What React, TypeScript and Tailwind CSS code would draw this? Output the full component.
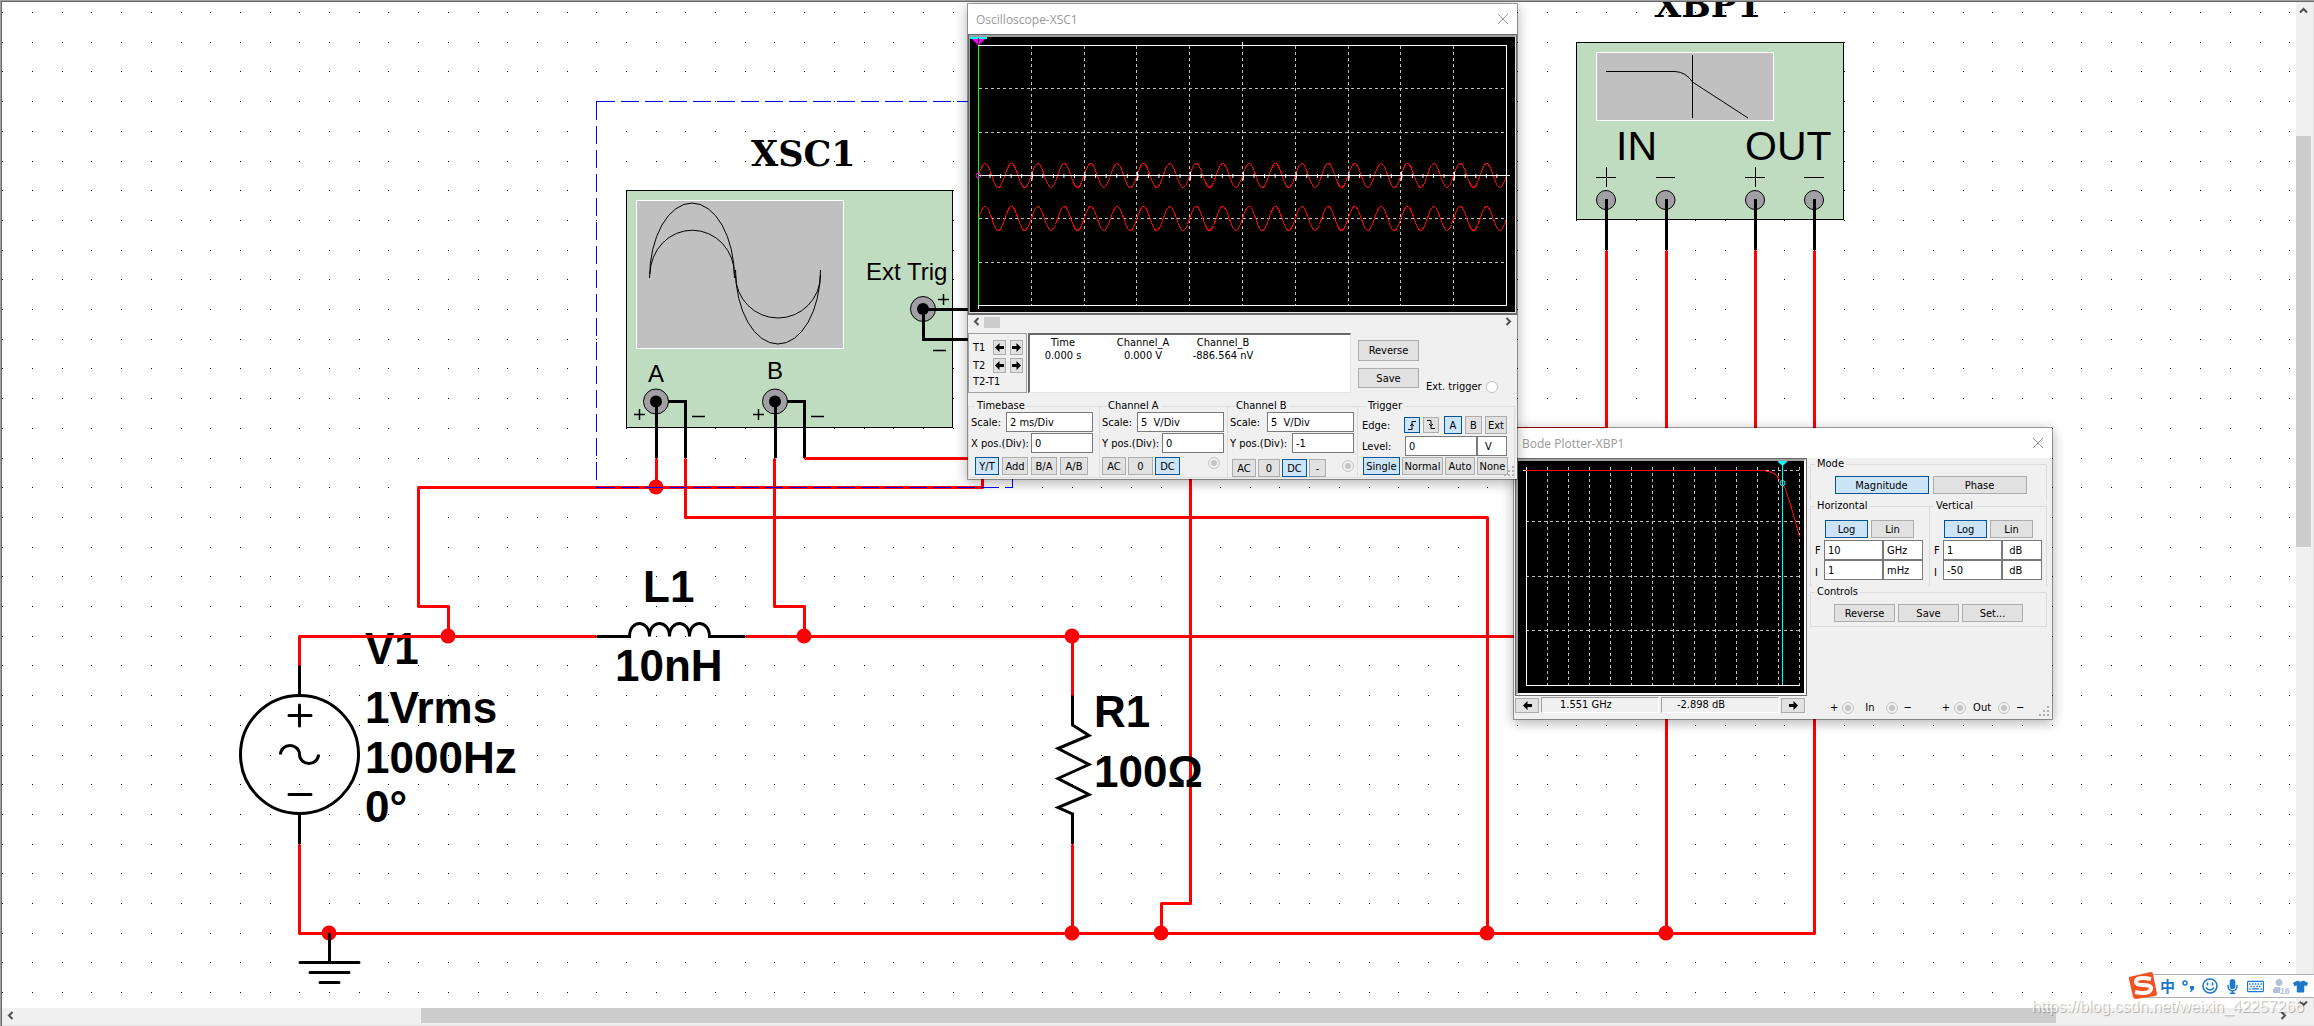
import type { ReactNode } from "react";
import { FaMicrophone, FaRegKeyboard, FaTshirt, FaUser } from "react-icons/fa";

// Schematic grid: wires and pins snap to these lines
const gx = (k: number) => Math.round(2.3 + 29.7 * k) + 0.5;
const gy = (k: number) => Math.round(12 + 29.7 * k) + 0.5;

const gridDots = () => {
  let d = "";
  for (let i = 0; i < 78; i++) {
    for (let j = 0; j < 34; j++) {
      d += `M${gx(i) - 0.5} ${gy(j)}h1`;
    }
  }
  return d;
};

// Turns a list of grid points into a wire path
const wire = (...pts: [number, number][]) =>
  pts.map(([x, y], i) => `${i ? "L" : "M"}${gx(x)} ${gy(y)}`).join("");

const WIRES = [
  wire([10, 22], [10, 21], [20, 21]),
  wire([25, 21], [51, 21]),
  wire([10, 28], [10, 31], [61, 31], [61, 8]),
  wire([15, 21], [15, 20], [14, 20], [14, 16], [33, 16], [33, 15]),
  wire([22, 15], [22, 16]),
  wire([23, 15], [23, 17], [50, 17], [50, 31]),
  wire([26, 15], [26, 20], [27, 20], [27, 21]),
  wire([27, 15], [40, 15], [40, 30], [39, 30], [39, 31]),
  wire([36, 21], [36, 23]),
  wire([36, 28], [36, 31]),
  wire([54, 8], [54, 14], [50, 14]),
  wire([56, 8], [56, 31]),
  wire([59, 8], [59, 15]),
];

const JUNCTIONS: [number, number][] = [
  [11, 31], [15, 21], [22, 16], [27, 21], [36, 21], [36, 31], [39, 31], [50, 31], [56, 31],
];

const sine = (x0: number, x1: number, yc: number, amp: number, cycles: number) => {
  let d = "";
  for (let x = x0; x <= x1; x += 1) {
    const y = yc - amp * Math.sin(((x - x0) / (x1 - x0)) * cycles * 2 * Math.PI);
    d += `${d ? "L" : "M"}${x} ${y.toFixed(1)}`;
  }
  return d;
};

const Schematic = () => (
  <svg className="absolute inset-0 h-full w-full" aria-label="Circuit schematic">
    <g transform="translate(-2 -2)" fill="none">
      <path d={gridDots()} stroke="#000" shapeRendering="crispEdges" />

      <g fill="#000" className="font-['Liberation_Sans',Arial,sans-serif] text-[44px] font-bold">
        <text x="365" y="664">V1</text>
      </g>

      {/* XSC1 body */}
      <g stroke="#000">
        <rect x="626.5" y="190.5" width="326" height="237" fill="#c0dcc0" />
        <rect x="636.5" y="200.5" width="207" height="148" fill="#c0c0c0" stroke="#fff" />
        <path d="M649.5 278A42.5 75 0 0 1 734.5 278M735.5 270A42.5 74 0 0 0 820.5 270" />
        <path d="M650 274A42 44 0 0 1 734.5 275M735.5 275A42.5 43 0 0 0 820.5 275" />
        <circle cx="656" cy="401.5" r="12.5" fill="#a0a0a4" />
        <circle cx="775" cy="401.5" r="12.5" fill="#a0a0a4" />
        <circle cx="923" cy="309" r="12.5" fill="#a0a0a4" />
        <path d="M634 414.5h11M639.5 409v11M753 414.5h11M758.5 409v11M938 299.5h11M943.5 294v11M692 416.5h13M811 416.5h13M933 350.5h13" strokeWidth="1.5" />
        <path
          d="M656.5 402V458M668 401.5H685.5V458M775.5 402V458M787 401.5H804.5V458M923 309.5H972M923.5 309V339.5H972"
          strokeWidth="3"
        />
      </g>
      <g fill="#000">
        <circle cx="656" cy="401.5" r="6" />
        <circle cx="775" cy="401.5" r="6" />
        <circle cx="923" cy="309" r="6" />
      </g>
      <g fill="#000" className="font-['Liberation_Sans',Arial,sans-serif] text-[24px]">
        <text x="866" y="280">Ext Trig</text>
        <text x="648" y="382">A</text>
        <text x="767" y="379">B</text>
      </g>

      {/* XBP1 body */}
      <g stroke="#000">
        <rect x="1576.5" y="42.5" width="267" height="177" fill="#c0dcc0" />
        <rect x="1596.5" y="52.5" width="177" height="68" fill="#c0c0c0" stroke="#fff" />
        <path d="M1606 71.5H1675Q1686 72 1692.5 82L1748 118M1692.5 55V118" />
        <path d="M1596 177.5h20M1606.5 167v20M1656 177.5h19M1745 177.5h20M1755.5 167v20M1804 177.5h20" />
        <circle cx="1606" cy="200" r="9.5" fill="#a0a0a4" />
        <circle cx="1665.5" cy="200" r="9.5" fill="#a0a0a4" />
        <circle cx="1755" cy="200" r="9.5" fill="#a0a0a4" />
        <circle cx="1814" cy="200" r="9.5" fill="#a0a0a4" />
        <path d="M1606.5 199V250M1666.5 199V250M1755.5 199V250M1814.5 199V250" strokeWidth="3" />
      </g>
      <g fill="#000" className="font-['Liberation_Sans',Arial,sans-serif] text-[41px]">
        <text x="1616" y="160">IN</text>
        <text x="1745" y="160">OUT</text>
      </g>

      {/* V1, L1, R1 and ground symbols */}
      <g stroke="#000" strokeWidth="3">
        <path d="M299.5 665V696M299.5 814V844" />
        <ellipse cx="299.5" cy="754.5" rx="59" ry="59" />
        <path d="M289 715.5h22M299.5 705v21M289 794.5h22" strokeLinecap="round" />
        <path d="M280.5 754.5A9.5 9 0 0 1 299.5 754.5A9.5 9 0 0 0 318.5 754.5" />
        <path d="M597 636.5H629.5C629.5 619 649.5 619 649.5 636.5C649.5 619 669.5 619 669.5 636.5C669.5 619 689.5 619 689.5 636.5C689.5 619 709.5 619 709.5 636.5H745" />
        <path d="M1072.5 695V725L1089 735.5L1058 748.5L1089 764.5L1058 778.5L1089 794.5L1058 807.5L1072.5 814V844" />
      </g>

      <g stroke="#f00" strokeWidth="3" strokeLinejoin="round">
        {WIRES.map((d) => (
          <path key={d} d={d} />
        ))}
      </g>
      {JUNCTIONS.map(([x, y]) => (
        <circle key={`${x}-${y}`} cx={gx(x) - 0.5} cy={gy(y) - 0.5} r="7.5" fill="#f00" />
      ))}
      <path
        d="M329.5 934V962M300 962.5H359M310 972.5H349M320 982.5H339"
        stroke="#000"
        strokeWidth="3"
        strokeLinecap="round"
      />
      <path d="M596.5 101.5H1012.5M596.5 101.5V487.5M596.5 487.5H1012.5V101.5" stroke="#00f" strokeDasharray="18 6" shapeRendering="crispEdges" />

      <g fill="#000" className="font-['Liberation_Sans',Arial,sans-serif] text-[44px] font-bold">
        <text x="365" y="723">1Vrms</text>
        <text x="365" y="773">1000Hz</text>
        <text x="365" y="822">0°</text>
        <text x="643" y="602">L1</text>
        <text x="615" y="681">10nH</text>
        <text x="1094" y="727">R1</text>
        <text x="1094" y="787">100Ω</text>
      </g>
      <g fill="#000" className="font-['DejaVu_Serif','Courier_New',serif] text-[35px] font-bold">
        <text x="751" y="166">XSC1</text>
        <text x="1654" y="17">XBP1</text>
      </g>
    </g>
  </svg>
);

const Btn = ({ children, active, label, className = "" }: { children: ReactNode; active?: boolean; label?: string; className?: string }) => (
  <button
    type="button"
    aria-label={label}
    className={`flex h-[18px] items-center justify-center border ${
      active ? "border-[#005499] bg-[#cce4f7]" : "border-[#adadad] bg-[#e1e1e1]"
    } ${className}`}
  >
    {children}
  </button>
);

const Arrow = ({ left }: { left?: boolean }) => (
  <svg width="9" height="9" viewBox="0 0 9 9" className={left ? "" : "rotate-180"}>
    <path d="M0 4.5L4.5 0V3H9V6H4.5V9Z" fill="#000" />
  </svg>
);

const Chevron = ({ className = "" }: { className?: string }) => (
  <svg width="9" height="9" viewBox="0 0 9 9" className={className}>
    <path d="M6.5 1L3 4.5L6.5 8" fill="none" stroke="#505050" strokeWidth="2" />
  </svg>
);

const Box = ({ id, value, label, className = "" }: { id?: string; value: string; label?: string; className?: string }) => (
  <input
    id={id}
    aria-label={label}
    defaultValue={value}
    className={`h-5 border border-[#7a7a7a] bg-white pl-[3px] ${className}`}
  />
);

const Field = ({ id, label, value, className }: { id: string; label: string; value: string; className: string }) => (
  <div className="flex items-center justify-between">
    <label htmlFor={id} className="whitespace-nowrap">{label}</label>
    <Box id={id} value={value} className={className} />
  </div>
);

const Radio = ({ label, checked, className = "" }: { label: string; checked?: boolean; className?: string }) => (
  <input
    type="radio"
    aria-label={label}
    defaultChecked={checked}
    className={`size-3 shrink-0 appearance-none rounded-full border border-[#c4c4c4] bg-white bg-clip-content p-0.5 checked:bg-[#c4c4c4] ${className}`}
  />
);

const Group = ({ title, children, className = "" }: { title: string; children: ReactNode; className?: string }) => (
  <fieldset className={`min-w-0 border-[#dcdcdc] ${className}`}>
    <legend className="ml-1 px-0.5 leading-3">{title}</legend>
    {children}
  </fieldset>
);

const Grip = () => (
  <svg width="11" height="11" viewBox="0 0 11 11" className="absolute right-0.5 bottom-0.5" aria-hidden="true">
    <path d="M8 1h2M4 5h2M8 5h2M0 9h2M4 9h2M8 9h2" stroke="#b0b0b0" strokeWidth="2" />
  </svg>
);

const Window = ({ title, children, className = "" }: { title: string; children: ReactNode; className?: string }) => (
  <section
    className={`absolute flex flex-col border border-black/35 bg-[#f0f0f0] bg-clip-padding shadow-[0_3px_12px_rgba(0,0,0,0.3)] ${className}`}
  >
    <header className="flex h-[30px] shrink-0 items-center justify-between bg-white pr-2 pl-2">
      <h2 className="font-['Open_Sans','Noto_Sans',sans-serif] text-[12px] text-[#999]">{title}</h2>
      <button type="button" aria-label={`Close ${title}`}>
        <svg width="12" height="12" viewBox="0 0 12 12">
          <path d="M1 1L11 11M11 1L1 11" stroke="#999" />
        </svg>
      </button>
    </header>
    {children}
  </section>
);

const ScopePlot = () => (
  <svg width="545" height="275" viewBox="0 0 545 275" className="block bg-black" fill="none" aria-label="Oscilloscope trace">
    <path d="M61.5 9V268M114.5 9V268M166.5 9V268M219.5 9V268M272.5 9V268M325.5 9V268M378.5 9V268M430.5 9V268M483.5 9V268M9 51.5H536M9 95.5H536M9 181.5H536M9 225.5H536" stroke="#c0c0c0" strokeDasharray="3 3" shapeRendering="crispEdges" />
    <path d={sine(8.5, 536.5, 138.5, 12, 20)} stroke="#f00" shapeRendering="crispEdges" />
    <path d={sine(8.5, 536.5, 181.5, 12, 20)} stroke="#f00" shapeRendering="crispEdges" />
    <path d="M8 8.5H536.5V268.5H8M8.5 268V272M272.5 5V9M8 138.5H540" stroke="#fff" shapeRendering="crispEdges" />
    <path d="M19.5 139H536" stroke="#fff" strokeWidth="4" strokeDasharray="1 9.56" />
    <path d="M61.5 139H536" stroke="#fff" strokeWidth="9" strokeDasharray="1 51.8" />
    <path d="M8.5 9V268" stroke="#0f0" shapeRendering="crispEdges" />
    <path d="M0 0H17V2H0Z" fill="#0ff" />
    <path d="M2 2H15L8.5 8.5Z" fill="#f0f" />
    <path d="M8.5 1V7" stroke="#000" />
    <circle cx="8.5" cy="138.5" r="2.5" stroke="#f0f" />
  </svg>
);

const Oscilloscope = () => (
  <Window title="Oscilloscope-XSC1" className="top-px left-[965px] z-20 w-[551px]">
    <div className="border border-b-2 border-[#696969]">
      <div className="border-t-2 border-r border-b border-l border-t-[#a0a0a0] border-r-[#e3e3e3] border-b-[#e3e3e3] border-l-[#a0a0a0]">
        <div className="overflow-hidden bg-black">
          <ScopePlot />
        </div>
      </div>
    </div>
    <div className="flex h-[18px] items-start justify-between px-1 pt-0.5">
      <Chevron />
      <div className="mr-auto ml-[3px] h-[11px] w-4 bg-[#cdcdcd]" />
      <Chevron className="rotate-180" />
    </div>

    <div className="flex h-[60px]">
      <div className="flex w-[59px] flex-col gap-[3px] border border-[#a0a0a0] pt-1.5 pl-1">
        {["T1", "T2"].map((t) => (
          <div key={t} className="flex items-center gap-1">
            <span className="w-4">{t}</span>
            <Btn label={`${t} left`} className="!h-[15px] w-[13px]"><Arrow left /></Btn>
            <Btn label={`${t} right`} className="!h-[15px] w-[13px]"><Arrow /></Btn>
          </div>
        ))}
        <span className="leading-3">T2-T1</span>
      </div>
      <div className="ml-px w-[323px] border-t-2 border-r border-b border-l-2 border-t-[#696969] border-r-[#e3e3e3] border-b-[#e3e3e3] border-l-[#696969] bg-white">
        <table className="mt-px text-center leading-[13px]">
          <thead>
            <tr>
              <th className="w-[66px] font-normal">Time</th>
              <th className="w-[94px] font-normal">Channel_A</th>
              <th className="w-[66px] font-normal whitespace-nowrap">Channel_B</th>
            </tr>
          </thead>
          <tbody>
            <tr>
              <td>0.000 s</td>
              <td>0.000 V</td>
              <td className="whitespace-nowrap">-886.564 nV</td>
            </tr>
          </tbody>
        </table>
      </div>
      <div className="ml-[7px] flex flex-col gap-[7px] pt-[7px]">
        <Btn className="!h-[21px] w-[61px]">Reverse</Btn>
        <Btn className="!h-5 w-[61px]">Save</Btn>
      </div>
      <div className="ml-[7px] flex items-center gap-1 self-end">
        <label htmlFor="ext-trigger">Ext. trigger</label>
        <input id="ext-trigger" type="radio" className="size-3 appearance-none rounded-full border border-[#c4c4c4] bg-white" />
      </div>
    </div>

    <div className="mt-[7px] flex h-[79px] pb-px">
      <Group title="Timebase" className="w-[132px] border pr-1.5 pl-0.5">
        <div className="flex flex-col gap-px">
          <Field id="tb-scale" label="Scale:" value="2 ms/Div" className="w-[87px]" />
          <Field id="tb-pos" label="X pos.(Div):" value="0" className="w-[62px]" />
        </div>
        <div className="mt-1 flex gap-[3px] pl-1">
          <Btn active className="w-6">Y/T</Btn>
          <Btn className="w-[26px]">Add</Btn>
          <Btn className="w-[26px]">B/A</Btn>
          <Btn className="w-7">A/B</Btn>
        </div>
      </Group>
      <Group title="Channel A" className="w-[128px] border-y border-r pr-[3px] pl-0.5">
        <div className="flex flex-col gap-px">
          <Field id="a-scale" label="Scale:" value="5  V/Div" className="w-[87px]" />
          <Field id="a-pos" label="Y pos.(Div):" value="0" className="w-[62px]" />
        </div>
        <div className="mt-1 flex gap-0.5">
          <Btn className="w-6">AC</Btn>
          <Btn className="w-[25px]">0</Btn>
          <Btn active className="w-[25px]">DC</Btn>
          <Radio label="Channel A connected" checked className="mr-1 ml-auto" />
        </div>
      </Group>
      <Group title="Channel B" className="w-[130px] border-y border-r pr-[3px] pl-0.5">
        <div className="flex flex-col gap-px">
          <Field id="b-scale" label="Scale:" value="5  V/Div" className="w-[87px]" />
          <Field id="b-pos" label="Y pos.(Div):" value="-1" className="w-[62px]" />
        </div>
        <div className="mt-1.5 flex gap-0.5 pl-0.5">
          <Btn className="w-6">AC</Btn>
          <Btn className="w-[22px]">0</Btn>
          <Btn active className="w-[25px]">DC</Btn>
          <Btn className="w-[17px]">-</Btn>
          <Radio label="Channel B connected" checked className="mt-px ml-auto" />
        </div>
      </Group>
      <Group title="Trigger" className="mr-0.5 flex-1 border-y border-r pl-1">
        <div className="flex items-center gap-[3px] pt-1">
          <span className="mr-auto">Edge:</span>
          <Btn active label="Rising edge" className="!h-4 w-4">
            <svg width="10" height="10" viewBox="0 0 10 10">
              <path d="M1 9.5H5V1.5H9M3 6L5 4L7 6" fill="none" stroke="#000" />
            </svg>
          </Btn>
          <Btn label="Falling edge" className="!h-4 w-4">
            <svg width="10" height="10" viewBox="0 0 10 10">
              <path d="M1 0.5H5V8.5H9M3 4L5 6L7 4" fill="none" stroke="#000" />
            </svg>
          </Btn>
          <Btn active className="ml-0.5 w-[18px]">A</Btn>
          <Btn className="w-[17px]">B</Btn>
          <Btn className="mr-[7px] w-[22px]">Ext</Btn>
        </div>
        <div className="mt-0.5 flex items-center">
          <label htmlFor="trig-level">Level:</label>
          <Box id="trig-level" value="0" className="ml-auto w-[72px]" />
          <Box label="Level unit" value="V" className="mr-[7px] w-[30px] pl-[7px]" />
        </div>
        <div className="mt-px flex gap-0.5 pl-px">
          <Btn active className="w-[37px]">Single</Btn>
          <Btn className="w-[41px]">Normal</Btn>
          <Btn className="w-[30px]">Auto</Btn>
          <Btn className="w-[31px]">None</Btn>
        </div>
      </Group>
    </div>
    <Grip />
  </Window>
);

const BodePlot = () => (
  <svg width="286" height="232" viewBox="0 0 286 232" className="block bg-black" fill="none" aria-label="Magnitude response">
    <path d="M29.5 6V224M50.5 6V224M71.5 6V224M92.5 6V224M113.5 6V224M134.5 6V224M155.5 6V224M176.5 6V224M197.5 6V224M218.5 6V224M239.5 6V224M260.5 6V224M281.5 6V224M8 9.5H282M8 60.5H282M8 115.5H282M8 169.5H282" stroke="#c0c0c0" strokeDasharray="3 3" shapeRendering="crispEdges" />
    <path d="M8.5 6V224.5H282M5 9.5H9" stroke="#fff" shapeRendering="crispEdges" />
    <path d="M8 9.5H243Q254 10 258 14Q263 20 267 27Q275 50 281.5 76" stroke="#f00" shapeRendering="crispEdges" />
    <path d="M264.5 1V224" stroke="#0ff" shapeRendering="crispEdges" />
    <path d="M260 0H269V1L264.5 5L260 1Z" fill="#0ff" />
    <circle cx="264.5" cy="22" r="2.5" stroke="#0ff" />
  </svg>
);

const AxisFields = ({ name, f, fUnit, i, iUnit }: { name: string; f: string; fUnit: string; i: string; iUnit: string }) => (
  <div className="pt-2 pl-1">
    <div className="flex gap-[3px] pl-2.5">
      <Btn active className="w-[43px]">Log</Btn>
      <Btn className="w-[43px]">Lin</Btn>
    </div>
    <div className="mt-0.5 flex items-center">
      <label htmlFor={`${name}-f`} className="w-[9px]">F</label>
      <Box id={`${name}-f`} value={f} className="w-[59px]" />
      <Box label={`${name} F unit`} value={fUnit} className="w-10" />
    </div>
    <div className="flex items-center">
      <label htmlFor={`${name}-i`} className="w-[9px] pt-1">I</label>
      <Box id={`${name}-i`} value={i} className="w-[59px]" />
      <Box label={`${name} I unit`} value={iUnit} className="w-10" />
    </div>
  </div>
);

const BodePlotter = () => (
  <Window title="Bode Plotter-XBP1" className="top-[425px] left-[1511px] z-10 w-[540px]">
    <div className="flex h-[261px]">
      <div className="ml-px flex w-[292px] shrink-0 flex-col">
        <div className="border border-[#696969]">
          <div className="border-2 border-t-[#a0a0a0] border-r-white border-b-white border-l-[#a0a0a0]">
            <BodePlot />
          </div>
        </div>
        <div className="mt-px flex items-center gap-0.5">
          <Btn label="Cursor left" className="!h-[15px] w-6"><Arrow left /></Btn>
          <output className="h-4 w-[118px] border border-t-[#a0a0a0] border-r-white border-b-white border-l-[#a0a0a0] pl-[18px] leading-[14px]">1.551 GHz</output>
          <output className="h-4 w-[118px] border border-t-[#a0a0a0] border-r-white border-b-white border-l-[#a0a0a0] pl-[15px] leading-[14px]">-2.898 dB</output>
          <Btn label="Cursor right" className="!h-[15px] w-6"><Arrow /></Btn>
        </div>
      </div>

      <div className="mr-[5px] ml-[3px] flex flex-1 flex-col">
        <Group title="Mode" className="h-[42px] border-x border-t">
          <div className="flex justify-center gap-1 pt-1.5 pl-1">
            <Btn active className="w-[94px]">Magnitude</Btn>
            <Btn className="w-[94px]">Phase</Btn>
          </div>
        </Group>
        <div className="flex h-[86px]">
          <Group title="Horizontal" className="w-[120px] border-x border-t">
            <AxisFields name="Horizontal" f="10" fUnit="GHz" i="1" iUnit="mHz" />
          </Group>
          <Group title="Vertical" className="flex-1 border-t border-r">
            <AxisFields name="Vertical" f="1" fUnit=" dB" i="-50" iUnit=" dB" />
          </Group>
        </div>
        <Group title="Controls" className="h-[41px] border">
          <div className="flex justify-center gap-[3px] pt-1.5">
            <Btn className="w-[61px]">Reverse</Btn>
            <Btn className="w-[61px]">Save</Btn>
            <Btn className="w-[61px]">Set...</Btn>
          </div>
        </Group>
        <div className="mt-auto mb-[5px] flex items-center gap-1 pl-5">
          <span>+</span>
          <Radio label="In plus" checked />
          <span className="mx-[7px]">In</span>
          <Radio label="In minus" checked />
          <span className="ml-0.5">−</span>
          <span className="ml-[26px]">+</span>
          <Radio label="Out plus" checked />
          <span className="mx-[3px]">Out</span>
          <Radio label="Out minus" checked />
          <span className="ml-0.5">−</span>
        </div>
      </div>
    </div>
    <Grip />
  </Window>
);

// Floating input-method bar in the lower right corner
const InputBar = () => (
  <div className="absolute right-0 bottom-[28px] z-30 flex h-6 w-[170px] items-center border-y border-[#b0b0b8] bg-white pl-3 text-[#1f77c9]">
    <svg width="30" height="30" viewBox="0 0 30 30" className="absolute -top-1 -left-4">
      <path d="M1 6L23 1Q25 1 25 3L29 23Q29 25 27 25L8 28Q6 28 5 26L1 8Z" fill="#f4511e" />
      <path d="M23 8Q8 5 8 11Q8 14 15 14Q24 14 23 18Q21 24 7 21" fill="none" stroke="#fff" strokeWidth="4" />
    </svg>
    <div className="flex w-full items-center justify-between pr-1.5 pl-1">
      <span className="font-['Noto_Sans_CJK_SC',sans-serif] text-[15px] leading-5 font-bold">中</span>
      <svg width="12" height="14" viewBox="0 0 12 14">
        <circle cx="3" cy="4" r="2" fill="none" stroke="currentColor" strokeWidth="1.5" />
        <path d="M8 7h4v3l-3 3H8l1-3H8Z" fill="currentColor" />
      </svg>
      <svg width="16" height="16" viewBox="0 0 16 16" fill="none" stroke="currentColor" strokeWidth="1.6">
        <circle cx="8" cy="8" r="7" />
        <path d="M5.5 4.5v3M10.5 4.5v3M4 9.5Q8 14.5 12 9.5" />
      </svg>
      <FaMicrophone size={15} />
      <FaRegKeyboard size={17} />
      <span className="relative text-[#b4c0da]">
        <FaUser size={14} />
        <span className="absolute right-[-4px] bottom-[-2px] bg-white font-['Liberation_Sans',sans-serif] text-[9px] leading-[8px] font-bold">16</span>
      </span>
      <FaTshirt size={15} />
    </div>
  </div>
);

const App = () => (
  <div className="relative flex h-screen flex-col overflow-hidden border-t border-l border-[#a0a0a0] bg-white font-['DejaVu_Sans_Condensed','DejaVu_Sans',sans-serif] text-[11px] leading-[13px] text-black">
    <div className="flex min-h-0 flex-1 flex-col border-t border-l border-[#696969]">
      <div className="flex min-h-0 flex-1">
        <main className="relative min-w-0 flex-1 overflow-hidden bg-white">
          <Schematic />
          <Oscilloscope />
          <BodePlotter />
        </main>
        <div className="flex w-[18px] flex-col items-center border-r border-[#e3e3e3] bg-[#f0f0f0] pt-1 pr-0.5">
          <Chevron className="rotate-90" />
          <div className="mt-[121px] h-[411px] w-full bg-[#cdcdcd]" />
          <Chevron className="mt-auto -rotate-90" />
        </div>
      </div>
      <div className="flex h-[18px] items-center border-b border-[#e3e3e3] bg-[#f0f0f0] pr-[26px] pb-0.5 pl-1">
        <Chevron />
        <div className="ml-[406px] h-[15px] w-[1635px] bg-[#cdcdcd]" />
        <Chevron className="ml-auto rotate-180" />
      </div>
    </div>
    <InputBar />
    <p className="pointer-events-none absolute right-2.5 bottom-[9px] z-20 font-['Liberation_Sans',Arial,sans-serif] text-[16px] leading-5 text-white/80 [text-shadow:1px_1px_1px_rgba(0,0,0,0.3)]">
      https://blog.csdn.net/weixin_42257266
    </p>
  </div>
);

export default App;
